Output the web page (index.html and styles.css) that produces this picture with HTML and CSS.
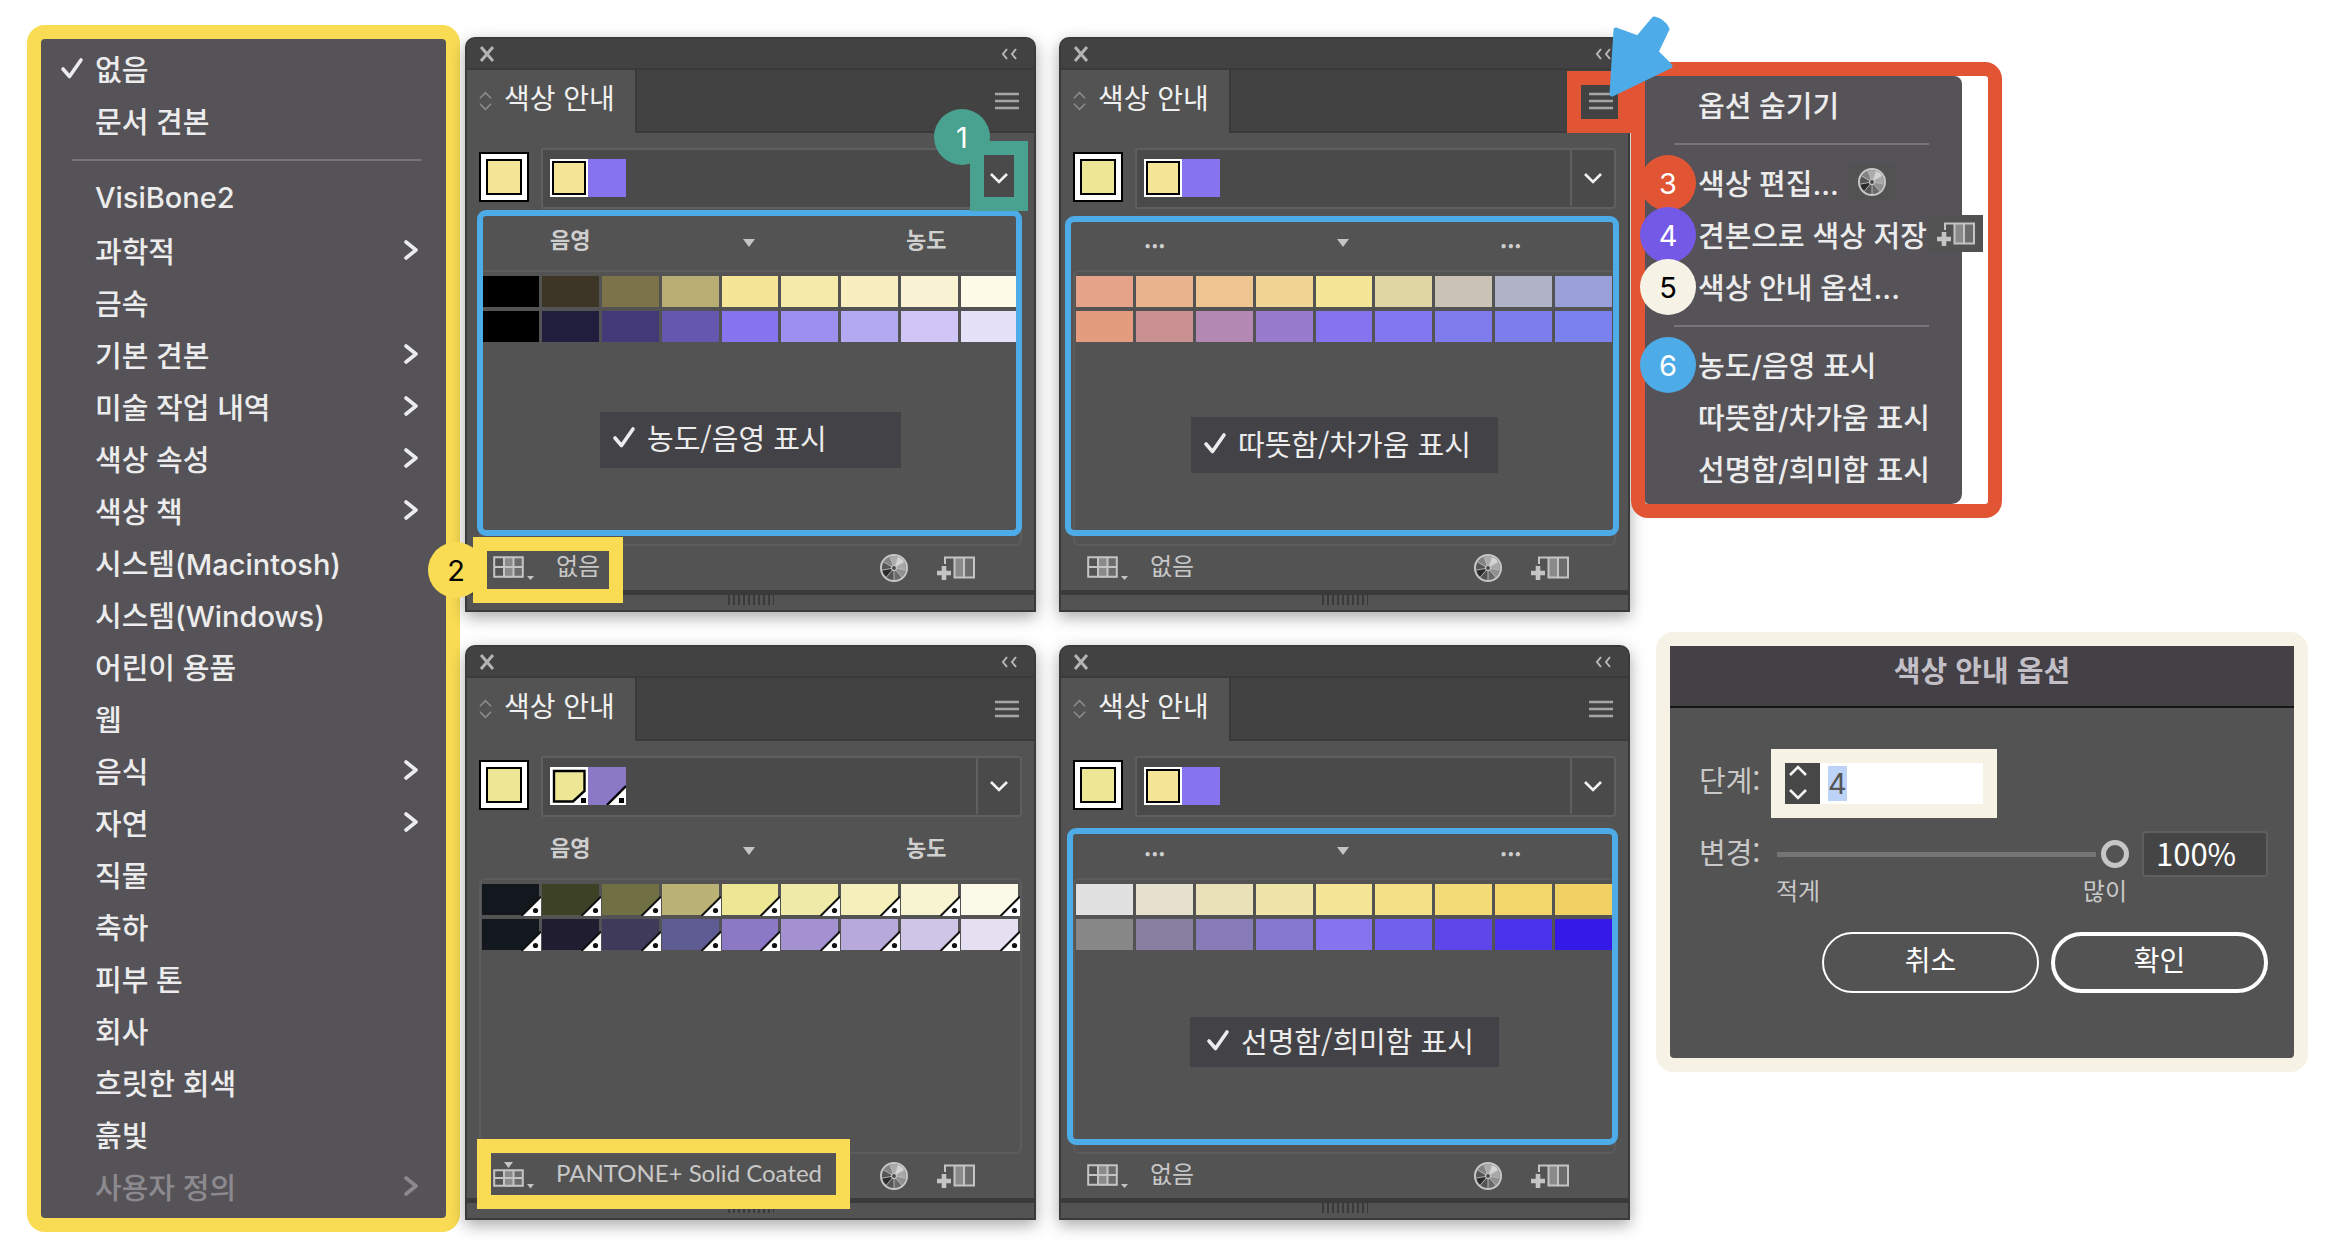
FILE: index.html
```html
<!DOCTYPE html>
<html lang="ko">
<head>
  <meta charset="UTF-8">
  <meta name="viewport" content="width=device-width, initial-scale=1.0">
  <title>색상 안내</title>
  <link rel="stylesheet" href="styles.css">
</head>
<body>

  <!-- shared icons -->
  <svg class="icon-defs" aria-hidden="true">
    <symbol id="i-close" viewBox="0 0 16 16"><path d="M2 1L14 15M14 1L2 15" stroke="#b4b4b4" stroke-width="3" fill="none"/></symbol>
    <symbol id="i-collapse" viewBox="0 0 16 12"><path d="M6 1L2 6L6 11M15 1L11 6L15 11" stroke="#b9b9b9" stroke-width="2" fill="none"/></symbol>
    <symbol id="i-updown" viewBox="0 0 14 20"><path d="M1 7L7 1L13 7M1 13L7 19L13 13" stroke="#8c8c8c" stroke-width="1.6" fill="none"/></symbol>
    <symbol id="i-menu" viewBox="0 0 24 18"><path d="M0 2H24M0 9H24M0 16H24" stroke="#a6a6a6" stroke-width="2.6"/></symbol>
    <symbol id="i-down" viewBox="0 0 18 12"><path d="M1 2L9 10L17 2" stroke="#f4f4f4" stroke-width="2.6" fill="none"/></symbol>
    <symbol id="i-check" viewBox="0 0 24 24"><path d="M3 13L9.500 20.500L21 4" stroke="currentColor" stroke-width="3.600" stroke-linecap="round" stroke-linejoin="round" fill="none"/></symbol>
    <symbol id="i-right" viewBox="0 0 14 24"><path d="M2 4L12 12L2 20" stroke="currentColor" stroke-width="3.600" stroke-linecap="round" stroke-linejoin="round" fill="none"/></symbol>
    <symbol id="i-tri" viewBox="0 0 12 8"><path d="M0 0H12L6 8Z" fill="#c4c4c4"/></symbol>
    <symbol id="i-library" viewBox="0 0 41 24">
      <rect x="11" y="2" width="10" height="20" fill="#8a8a8a"/><rect x="21" y="2" width="9" height="20" fill="#6c6c6c"/>
      <path d="M1.200 1.200H29.800V20.800H1.200ZM11 1V21M20.500 1V21M1 11H30" stroke="#c4c4c4" stroke-width="2" fill="none"/>
      <path d="M34 20H41L37.500 24Z" fill="#c4c4c4"/>
    </symbol>
    <symbol id="i-book" viewBox="0 0 41 30">
      <rect x="11" y="9" width="10" height="17" fill="#8a8a8a"/><rect x="21" y="9" width="9" height="17" fill="#6c6c6c"/>
      <path d="M1.200 9.200H29.800V24.800H1.200ZM11 9V25M20.500 9V25M1 17H30" stroke="#c4c4c4" stroke-width="2" fill="none"/>
      <path d="M11 1H20L15.500 7ZM34 23H41L37.500 27.500Z" fill="#c4c4c4"/>
    </symbol>
    <symbol id="i-wheel" viewBox="-15 -15 30 30">
      <circle r="13.500" fill="#555"/>
      <path d="M0 0L-4.100 -11.300A12 12 0 0 1 4.100 -11.300Z" fill="#ababab"/>
      <path d="M0 0L4.100 -11.300A12 12 0 0 1 10.400 -6Z" fill="#d4d4d4"/>
      <path d="M0 0L10.400 -6A12 12 0 0 1 11.800 2.100Z" fill="#a8a8a8"/>
      <path d="M0 0L11.800 2.100A12 12 0 0 1 7.700 9.200Z" fill="#909090"/>
      <path d="M0 0L7.700 9.200A12 12 0 0 1 0 12Z" fill="#6a6a6a"/>
      <path d="M0 0L-7.700 9.200A12 12 0 0 1 -11.800 2.100Z" fill="#2b2b2b"/>
      <path d="M0 0L-10.400 -6A12 12 0 0 1 -4.100 -11.300Z" fill="#828282"/>
      <path d="M0 0L4.100 -11.300M0 0L10.400 -6M0 0L11.800 2.100M0 0L7.700 9.200M0 0V12M0 0L-7.700 9.200M0 0L-11.800 2.100M0 0L-10.400 -6M0 0L-4.100 -11.300" stroke="#bdbdbd" stroke-width="0.900"/>
      <circle r="13" fill="none" stroke="#c6c6c6" stroke-width="2"/>
      <circle r="2.500" fill="#4a4a4a" stroke="#c6c6c6" stroke-width="1.200"/>
    </symbol>
    <symbol id="i-save" viewBox="0 0 38 24">
      <rect x="18" y="2" width="9" height="19" fill="#8a8a8a"/><rect x="27" y="2" width="9" height="19" fill="#6c6c6c"/>
      <path d="M8 8V1.500H37V21.500H17.500V2M27 2V21" stroke="#c4c4c4" stroke-width="2" fill="none"/>
      <path d="M7 10V24M0 17H14" stroke="#c4c4c4" stroke-width="4.600"/>
    </symbol>
    <symbol id="i-spot" viewBox="0 0 20 20">
      <path d="M20 1V20H1Z" fill="#fff"/><path d="M0.500 20L20 0.500" stroke="#111" stroke-width="2"/><circle cx="14.500" cy="14.500" r="2.600" fill="#111"/>
    </symbol>
  </svg>

  <main class="board">

    <!-- library list -->
    <nav class="library">
      <ul class="menu-list">
        <li><button><svg class="check"><use href="#i-check"/></svg>없음</button></li>
        <li><button>문서 견본</button></li>
        <li class="rule"></li>
        <li><button>VisiBone2</button></li>
        <li><button>과학적<svg class="more"><use href="#i-right"/></svg></button></li>
        <li><button>금속</button></li>
        <li><button>기본 견본<svg class="more"><use href="#i-right"/></svg></button></li>
        <li><button>미술 작업 내역<svg class="more"><use href="#i-right"/></svg></button></li>
        <li><button>색상 속성<svg class="more"><use href="#i-right"/></svg></button></li>
        <li><button>색상 책<svg class="more"><use href="#i-right"/></svg></button></li>
        <li><button>시스템(Macintosh)</button></li>
        <li><button>시스템(Windows)</button></li>
        <li><button>어린이 용품</button></li>
        <li><button>웹</button></li>
        <li><button>음식<svg class="more"><use href="#i-right"/></svg></button></li>
        <li><button>자연<svg class="more"><use href="#i-right"/></svg></button></li>
        <li><button>직물</button></li>
        <li><button>축하</button></li>
        <li><button>피부 톤</button></li>
        <li><button>회사</button></li>
        <li><button>흐릿한 회색</button></li>
        <li><button>흙빛</button></li>
        <li><button disabled>사용자 정의<svg class="more"><use href="#i-right"/></svg></button></li>
      </ul>
    </nav>

    <div class="panels">

      <!-- tints / shades -->
      <section class="panel">
        <header class="panel-top">
          <button aria-label="닫기"><svg class="close"><use href="#i-close"/></svg></button>
          <button aria-label="축소"><svg class="collapse"><use href="#i-collapse"/></svg></button>
        </header>
        <div class="panel-tabs">
          <button class="tab"><svg class="updown"><use href="#i-updown"/></svg>색상 안내</button>
          <button class="burger" aria-label="메뉴"><svg><use href="#i-menu"/></svg></button>
        </div>
        <div class="harmony">
          <button class="base" aria-label="기본 색상"><span class="base-fill warm"></span></button>
          <div class="rule-box">
            <span class="chip chip-key"></span><span class="chip chip-violet"></span>
            <button class="drop" aria-label="색상 조화 규칙"><svg><use href="#i-down"/></svg></button>
          </div>
        </div>
        <div class="heads"><span>음영</span><svg><use href="#i-tri"/></svg><span>농도</span></div>
        <div class="swatches" data-set="tints"></div>
        <footer class="panel-foot">
          <button aria-label="견본 라이브러리"><svg class="lib"><use href="#i-library"/></svg></button>
          <span class="lib-name">없음</span>
          <button class="edit" aria-label="색상 편집"><svg class="wheel"><use href="#i-wheel"/></svg></button>
          <button aria-label="견본으로 색상 저장"><svg class="save"><use href="#i-save"/></svg></button>
        </footer>
        <div class="grip"><i></i></div>

        <div class="mark mark-blue blue-1"></div>
        <div class="mark mark-green"></div>
        <span class="badge badge-1">1</span>
        <div class="mark mark-yellow yellow-1"></div>
        <span class="badge badge-2">2</span>
        <p class="note note-1"><svg class="check"><use href="#i-check"/></svg>농도/음영 표시</p>
      </section>

      <!-- warm / cool -->
      <section class="panel">
        <header class="panel-top">
          <button aria-label="닫기"><svg class="close"><use href="#i-close"/></svg></button>
          <button aria-label="축소"><svg class="collapse"><use href="#i-collapse"/></svg></button>
        </header>
        <div class="panel-tabs">
          <button class="tab"><svg class="updown"><use href="#i-updown"/></svg>색상 안내</button>
          <button class="burger" aria-label="메뉴"><svg><use href="#i-menu"/></svg></button>
        </div>
        <div class="harmony">
          <button class="base" aria-label="기본 색상"><span class="base-fill"></span></button>
          <div class="rule-box">
            <span class="chip chip-key"></span><span class="chip chip-violet"></span>
            <button class="drop" aria-label="색상 조화 규칙"><svg><use href="#i-down"/></svg></button>
          </div>
        </div>
        <div class="heads"><span>...</span><svg><use href="#i-tri"/></svg><span>...</span></div>
        <div class="swatches" data-set="warm"></div>
        <footer class="panel-foot">
          <button aria-label="견본 라이브러리"><svg class="lib"><use href="#i-library"/></svg></button>
          <span class="lib-name">없음</span>
          <button class="edit" aria-label="색상 편집"><svg class="wheel"><use href="#i-wheel"/></svg></button>
          <button aria-label="견본으로 색상 저장"><svg class="save"><use href="#i-save"/></svg></button>
        </footer>
        <div class="grip"><i></i></div>

        <div class="mark mark-blue blue-2"></div>
        <div class="mark mark-red"></div>
        <p class="note note-2"><svg class="check"><use href="#i-check"/></svg>따뜻함/차가움 표시</p>
      </section>

      <!-- spot colours from a colour book -->
      <section class="panel">
        <header class="panel-top">
          <button aria-label="닫기"><svg class="close"><use href="#i-close"/></svg></button>
          <button aria-label="축소"><svg class="collapse"><use href="#i-collapse"/></svg></button>
        </header>
        <div class="panel-tabs">
          <button class="tab"><svg class="updown"><use href="#i-updown"/></svg>색상 안내</button>
          <button class="burger" aria-label="메뉴"><svg><use href="#i-menu"/></svg></button>
        </div>
        <div class="harmony">
          <button class="base" aria-label="기본 색상"><span class="base-fill"></span></button>
          <div class="rule-box">
            <svg class="spot-chips" viewBox="0 0 76 38">
              <rect width="76" height="38" fill="#fff"/>
              <path d="M4 4H34.500V24L23 34.500H4Z" fill="#ece695" stroke="#000" stroke-width="2.400"/>
              <rect x="31" y="31" width="5" height="5"/>
              <path d="M38 0H76V19L57 38H38Z" fill="#8c79c6"/>
              <path d="M76 19L57 38" stroke="#000" stroke-width="2.400"/>
              <rect x="69" y="31" width="5" height="5"/>
            </svg>
            <button class="drop" aria-label="색상 조화 규칙"><svg><use href="#i-down"/></svg></button>
          </div>
        </div>
        <div class="heads"><span>음영</span><svg><use href="#i-tri"/></svg><span>농도</span></div>
        <div class="swatches" data-set="spot"></div>
        <footer class="panel-foot">
          <button aria-label="견본 라이브러리"><svg class="lib book"><use href="#i-book"/></svg></button>
          <span class="lib-name latin">PANTONE+ Solid Coated</span>
          <button class="edit" aria-label="색상 편집"><svg class="wheel"><use href="#i-wheel"/></svg></button>
          <button aria-label="견본으로 색상 저장"><svg class="save"><use href="#i-save"/></svg></button>
        </footer>
        <div class="grip"><i></i></div>

        <div class="mark mark-yellow yellow-2"></div>
      </section>

      <!-- vivid / muted -->
      <section class="panel">
        <header class="panel-top">
          <button aria-label="닫기"><svg class="close"><use href="#i-close"/></svg></button>
          <button aria-label="축소"><svg class="collapse"><use href="#i-collapse"/></svg></button>
        </header>
        <div class="panel-tabs">
          <button class="tab"><svg class="updown"><use href="#i-updown"/></svg>색상 안내</button>
          <button class="burger" aria-label="메뉴"><svg><use href="#i-menu"/></svg></button>
        </div>
        <div class="harmony">
          <button class="base" aria-label="기본 색상"><span class="base-fill"></span></button>
          <div class="rule-box">
            <span class="chip chip-key"></span><span class="chip chip-violet"></span>
            <button class="drop" aria-label="색상 조화 규칙"><svg><use href="#i-down"/></svg></button>
          </div>
        </div>
        <div class="heads"><span>...</span><svg><use href="#i-tri"/></svg><span>...</span></div>
        <div class="swatches" data-set="vivid"></div>
        <footer class="panel-foot">
          <button aria-label="견본 라이브러리"><svg class="lib"><use href="#i-library"/></svg></button>
          <span class="lib-name">없음</span>
          <button class="edit" aria-label="색상 편집"><svg class="wheel"><use href="#i-wheel"/></svg></button>
          <button aria-label="견본으로 색상 저장"><svg class="save"><use href="#i-save"/></svg></button>
        </footer>
        <div class="grip"><i></i></div>

        <div class="mark mark-blue blue-3"></div>
        <p class="note note-3"><svg class="check"><use href="#i-check"/></svg>선명함/희미함 표시</p>
      </section>
    </div>

    <div class="side">
      <!-- panel menu -->
      <nav class="options">
        <ul class="menu-list">
          <li><button>옵션 숨기기</button></li>
          <li class="rule"></li>
          <li><span class="badge badge-3">3</span><button>색상 편집...<span class="hint hint-wheel"><svg class="wheel"><use href="#i-wheel"/></svg></span></button></li>
          <li><span class="badge badge-4">4</span><button>견본으로 색상 저장<span class="hint hint-save"><svg class="save"><use href="#i-save"/></svg></span></button></li>
          <li><span class="badge badge-5">5</span><button>색상 안내 옵션...</button></li>
          <li class="rule"></li>
          <li><span class="badge badge-6">6</span><button>농도/음영 표시</button></li>
          <li><button>따뜻함/차가움 표시</button></li>
          <li><button>선명함/희미함 표시</button></li>
        </ul>
        <svg class="arrow" viewBox="0 0 64 82"><path d="M3 78L7 14L29 22L45 3Q54 5 58 13L47 36L61 50Z" fill="#4dabe8" stroke="#4dabe8" stroke-width="5" stroke-linejoin="round"/></svg>
      </nav>

      <!-- options dialog -->
      <form class="dialog">
        <h2>색상 안내 옵션</h2>
        <div class="dialog-body">
          <div class="row">
            <label for="steps">단계:</label>
            <div class="stepper">
              <div class="step-buttons">
                <button type="button" aria-label="증가"><svg class="flip"><use href="#i-down"/></svg></button>
                <button type="button" aria-label="감소"><svg><use href="#i-down"/></svg></button>
              </div>
              <input type="text" id="steps" value="4" autofocus>
            </div>
          </div>
          <div class="row">
            <label for="variation">변경:</label>
            <input type="range" id="variation" min="0" max="100" value="100">
            <input type="text" id="percent" value="100%" aria-label="변경 비율">
          </div>
          <div class="ends"><span>적게</span><span>많이</span></div>
          <div class="actions">
            <button type="button">취소</button>
            <button type="button" class="primary">확인</button>
          </div>
        </div>
      </form>
    </div>
  </main>

  <script>
    const sets = {
      tints: [
        "#000000", "#3d3627", "#7d734b", "#b8ae74", "#f5e596", "#f6eaaa", "#f9eebf", "#faf3d3", "#fdfae8",
        "#000000", "#211d3d", "#433878", "#6556b0", "#8574ee", "#9b8fef", "#b3a9f1", "#cfc6f7", "#e5e1f9"
      ],
      warm: [
        "#e5a489", "#e9b38d", "#eec491", "#f1d594", "#f5e596", "#dfd6a4", "#cac3b5", "#b0b3c8", "#9aa0da",
        "#e49c7e", "#ca9192", "#b388b2", "#997bcd", "#8574ee", "#8277ee", "#7f7bec", "#7d7eec", "#7b82ed"
      ],
      spot: [
        "#13181e", "#3d4227", "#707044", "#bab375", "#ece695", "#efeaa7", "#f5efbb", "#f8f4d2", "#fbfae8",
        "#13181e", "#201d30", "#3f395a", "#5f5c93", "#8c79c6", "#a491d0", "#b7aadb", "#cfc5e6", "#e4e0f2"
      ],
      vivid: [
        "#e1e1e1", "#e6e1cf", "#ebe1b9", "#f0e5a8", "#f5e596", "#f4e087", "#f3db77", "#f2d66c", "#f1d163",
        "#878787", "#8880a0", "#877cb8", "#8678d1", "#8574ee", "#7060eb", "#5e47ea", "#4a31ea", "#3519e8"
      ]
    };

    document.querySelectorAll(".swatches").forEach((box) => {
      const name = box.dataset.set;
      const corner = name === "spot" ? '<svg><use href="#i-spot"/></svg>' : "";
      box.innerHTML = sets[name]
        .map((c) => `<button style="background:${c}" aria-label="${c}">${corner}</button>`)
        .join("");
    });

    const steps = document.getElementById("steps");
    steps.focus();
    steps.select();

    const variation = document.getElementById("variation");
    variation.addEventListener("input", () => {
      document.getElementById("percent").value = variation.value + "%";
    });
  </script>
</body>
</html>
```
FILE: styles.css
```css
* {
  box-sizing: border-box;
}

body {
  margin: 0;
  background: #fff;
  color: #ececec;
  font-family: Inter, "Noto Sans CJK KR", sans-serif;
  font-size: 28px;
}

button,
input {
  margin: 0;
  padding: 0;
  border: 0;
  background: none;
  color: inherit;
  font: inherit;
}

svg {
  display: block;
  flex: none;
}

ul,
p,
h2 {
  margin: 0;
  padding: 0;
  list-style: none;
}

.icon-defs {
  position: absolute;
  width: 0;
  height: 0;
}

.board {
  display: grid;
  grid-template-columns: 438fr 1165fr 678fr;
  align-items: start;
  padding: 25px 22px 20px 27px;
}

/* menus */
.library {
  margin-right: 5px;
  padding: 4px 0 5px;
  border: 14px solid #f9dc53;
  border-radius: 18px;
  background: #555358;
}

.menu-list li {
  position: relative;
  height: 52px;
}

.menu-list button {
  display: flex;
  align-items: center;
  width: 100%;
  height: 52px;
  padding: 0 28px 3px 54px;
  font-size: 29px;
  font-weight: 500;
  text-align: left;
  white-space: nowrap;
}

.menu-list button:disabled {
  color: #8c8a8f;
}

.menu-list .rule {
  height: 26px;
  padding-top: 12px;
}

.menu-list .rule::before {
  content: "";
  display: block;
  height: 2px;
  margin: 0 25px 0 31px;
  background: #77757b;
}

.check {
  width: 24px;
  height: 24px;
}

.library .check {
  margin: 0 11px 0 -35px;
}

.more {
  width: 14px;
  height: 24px;
  margin-left: auto;
}

/* panels */
.panels {
  display: grid;
  grid-template-columns: 1fr 1fr;
  gap: 33px 23px;
  padding-top: 12px;
}

.panel {
  position: relative;
  border: 2px solid #3a3a3a;
  border-radius: 10px 10px 0 0;
  background: #535353;
  box-shadow: 0 5px 16px rgba(0, 0, 0, 0.35);
}

.panel-top {
  display: flex;
  justify-content: space-between;
  align-items: center;
  height: 31px;
  padding: 0 17px 0 12px;
  border-bottom: 2px solid #3a3a3a;
  border-radius: 8px 8px 0 0;
  background: #424242;
}

.close {
  width: 16px;
  height: 16px;
}

.collapse {
  width: 16px;
  height: 12px;
}

.panel-tabs {
  display: flex;
  justify-content: space-between;
  height: 63px;
}

.tab {
  display: flex;
  align-items: center;
  gap: 12px;
  flex: none;
  width: 168px;
  padding: 0 0 10px 12px;
  color: #f0f0f0;
  font-family: "Noto Sans CJK KR", sans-serif;
  white-space: nowrap;
}

.updown {
  width: 13px;
  height: 20px;
  margin-top: 8px;
}

.burger {
  display: flex;
  flex: 1;
  justify-content: flex-end;
  align-items: center;
  padding-right: 15px;
  border-left: 2px solid #3a3a3a;
  border-bottom: 2px solid #3a3a3a;
  background: #424242;
}

.burger svg {
  width: 24px;
  height: 18px;
}

.harmony {
  display: flex;
  align-items: center;
  gap: 12px;
  padding: 15px 12px 0;
}

.base {
  width: 50px;
  height: 50px;
  margin-bottom: 4px;
  padding: 5px;
  border: 2px solid #000;
  background: #fff;
}

.base-fill {
  display: block;
  height: 36px;
  border: 2px solid #000;
  background: #ece695;
}

.base-fill.warm {
  background: #f5e596;
}

.rule-box {
  display: flex;
  align-items: center;
  flex: 1;
  height: 61px;
  padding: 0 0 1px 7px;
  border: 2px solid #5f5f5f;
  border-radius: 2px 4px 4px 2px;
  background: #4a4a4a;
}

.chip {
  width: 38px;
  height: 38px;
}

.chip-key {
  width: 34px;
  height: 34px;
  margin: 2px;
  border: 2px solid #000;
  outline: 2px solid #fff;
  background: #f5e596;
}

.chip-violet {
  background: #8574ee;
}

.spot-chips {
  width: 76px;
  height: 38px;
}

.drop {
  display: flex;
  justify-content: center;
  align-items: center;
  width: 44px;
  height: 100%;
  margin-left: auto;
  border-left: 2px solid #5f5f5f;
}

.drop svg {
  width: 18px;
  height: 12px;
}

.heads {
  display: grid;
  grid-template-columns: 1fr 1fr 1fr;
  align-items: center;
  justify-items: center;
  height: 61px;
  padding: 0 18px 4px 15px;
  color: #cfcfcf;
  font-family: "Noto Sans CJK KR", sans-serif;
  font-size: 22px;
  font-weight: 700;
}

.heads span {
  min-width: 42px;
}

.heads svg {
  width: 12px;
  height: 8px;
  margin-top: 10px;
}

.swatches {
  display: grid;
  grid-template-columns: repeat(9, 1fr);
  grid-auto-rows: 31px;
  gap: 4px 3px;
  height: 276px;
  margin: 0 12px;
  padding: 4px 2px 0 1px;
  border: 2px solid #5c5c5c;
  border-radius: 6px;
}

.swatches button {
  position: relative;
}

.swatches svg {
  position: absolute;
  right: -2px;
  bottom: -1px;
  width: 20px;
  height: 20px;
}

.panel-foot {
  display: flex;
  align-items: center;
  height: 44px;
  padding: 0 59px 0 26px;
}

.lib {
  width: 41px;
  height: 24px;
}

.lib.book {
  height: 30px;
}

.lib-name {
  margin-left: 22px;
  padding-bottom: 6px;
  color: #c8c8c8;
  font-family: "Noto Sans CJK KR", sans-serif;
  font-size: 24px;
  line-height: 36px;
  white-space: nowrap;
}

.lib-name.latin {
  font-family: Lato, sans-serif;
}

.edit {
  margin: 0 28px 0 auto;
}

.wheel {
  width: 30px;
  height: 30px;
}

.save {
  width: 38px;
  height: 24px;
}

.grip {
  height: 20px;
  border-top: 5px solid #3a3a3a;
}

.grip i {
  display: block;
  width: 46px;
  height: 10px;
  margin: 0 auto;
  background: repeating-linear-gradient(90deg, #3a3a3a 0 2px, #535353 2px 5px);
}

/* annotations over the panels */
.mark {
  position: absolute;
  pointer-events: none;
}

.mark-blue {
  border: 6px solid #4dabe8;
  border-radius: 9px;
}

.blue-1 {
  top: 171px;
  left: 10px;
  right: 12px;
  height: 326px;
}

.blue-2 {
  top: 177px;
  left: 4px;
  right: 9px;
  height: 320px;
}

.blue-3 {
  top: 181px;
  left: 6px;
  right: 10px;
  height: 317px;
}

.mark-green {
  top: 102px;
  right: 6px;
  width: 58px;
  height: 70px;
  border: 14px solid #49a18f;
}

.mark-red {
  top: 32px;
  right: -4px;
  width: 65px;
  height: 62px;
  border: 14px solid #e15534;
}

.mark-yellow {
  border: 14px solid #f9dc53;
}

.yellow-1 {
  top: 498px;
  left: 6px;
  width: 150px;
  height: 66px;
}

.yellow-2 {
  top: 492px;
  left: 10px;
  width: 373px;
  height: 70px;
}

.badge {
  position: absolute;
  display: flex;
  justify-content: center;
  align-items: center;
  width: 56px;
  height: 56px;
  border-radius: 50%;
  color: #fff;
  font-size: 29px;
}

.badge-1 {
  top: 70px;
  right: 44px;
  background: #49a18f;
}

.badge-2 {
  top: 503px;
  left: -39px;
  background: #f9dc53;
  color: #000;
}

.note {
  position: absolute;
  display: flex;
  align-items: center;
  gap: 11px;
  height: 56px;
  padding: 0 0 4px 12px;
  background: #434247;
  font-family: "Noto Sans CJK KR", sans-serif;
  font-size: 29px;
  white-space: nowrap;
}

.note-1 {
  top: 373px;
  left: 133px;
  width: 301px;
  padding-bottom: 6px;
}

.note-2 {
  top: 378px;
  left: 130px;
  width: 307px;
}

.note-3 {
  top: 370px;
  left: 129px;
  width: 309px;
  height: 50px;
  padding-left: 16px;
}

/* panel menu */
.side {
  display: flex;
  flex-direction: column;
  gap: 114px;
  padding: 37px 0 0 1px;
}

.options {
  position: relative;
  width: 371px;
  padding-right: 26px;
  border: 14px solid #e15534;
  border-radius: 17px;
}

.options .menu-list {
  padding: 3px 0 9px;
  border-radius: 0 8px 10px 4px;
  background: #555358;
}

.options .menu-list button {
  padding-left: 53px;
}

.options .rule::before {
  margin: 0 33px 0 29px;
}

.options .badge {
  top: -2px;
  left: -5px;
}

.badge-3 {
  background: #e15534;
}

.badge-4 {
  background: #7359e6;
}

.options .badge-5 {
  background: #f6f3e6;
  color: #000;
}

.badge-6 {
  background: #4dabe8;
}

.hint {
  display: flex;
  align-items: center;
  height: 37px;
  background: #525252;
}

.hint-wheel {
  margin-left: 10px;
  padding: 0 8px;
}

.hint-save {
  margin-left: 2px;
  padding: 0 8px;
}

.arrow {
  position: absolute;
  top: -60px;
  left: -36px;
  width: 64px;
  height: 82px;
}

/* options dialog */
.dialog {
  margin-left: 25px;
  border: 14px solid #f6f3e6;
  border-radius: 18px;
  background: #535353;
}

.dialog h2 {
  height: 62px;
  border-bottom: 2px solid #161616;
  background: #434046;
  color: #c3bfc6;
  font-family: "Noto Sans CJK KR", sans-serif;
  font-size: 29px;
  font-weight: 700;
  line-height: 47px;
  text-align: center;
}

.dialog-body {
  padding: 41px 26px 65px 29px;
  color: #c8c8c8;
  font-family: "Noto Sans CJK KR", sans-serif;
}

.row {
  display: flex;
  align-items: center;
}

.row + .row {
  margin-top: 12px;
}

.row label {
  width: 72px;
  padding-bottom: 10px;
  font-size: 29px;
  white-space: nowrap;
}

.row + .row label {
  padding-bottom: 6px;
}

.stepper {
  display: flex;
  width: 226px;
  height: 69px;
  border: 14px solid #f6f3e6;
}

.step-buttons {
  display: flex;
  flex-direction: column;
  justify-content: space-between;
  width: 35px;
  padding: 2px 0 4px 4px;
  background: #474747;
}

.step-buttons svg {
  width: 18px;
  height: 12px;
}

.flip {
  transform: rotate(180deg);
}

#steps {
  flex: 1;
  min-width: 0;
  padding: 0 0 1px 8px;
  outline: none;
  background: #fff;
  color: #555;
  font-family: Inter, sans-serif;
  font-size: 29px;
}

#steps::selection {
  background: #bcd3f7;
  color: #555;
}

#variation {
  flex: 1;
  min-width: 0;
  height: 30px;
  margin: 0 13px 0 6px;
  appearance: none;
}

#variation::-webkit-slider-runnable-track {
  height: 5px;
  background: linear-gradient(90deg, #757575 calc(100% - 33px), transparent calc(100% - 33px));
}

#variation::-webkit-slider-thumb {
  width: 28px;
  height: 28px;
  margin-top: -12px;
  border: 5px solid #c6c6c6;
  border-radius: 50%;
  background: #535353;
  appearance: none;
}

#percent {
  width: 126px;
  height: 46px;
  padding: 0 0 4px 12px;
  border: 2px solid #5f5f5f;
  border-radius: 4px;
  background: #454545;
  color: #fff;
  font-size: 31px;
}

.ends {
  display: flex;
  justify-content: space-between;
  padding: 0 141px 0 77px;
  font-size: 24px;
  line-height: 24px;
}

.actions {
  display: flex;
  justify-content: flex-end;
  gap: 12px;
  margin-top: 30px;
}

.actions button {
  width: 217px;
  height: 61px;
  padding-bottom: 7px;
  border: 2px solid #fff;
  border-radius: 31px;
  color: #fff;
}

.actions .primary {
  border-width: 4px;
}
```
